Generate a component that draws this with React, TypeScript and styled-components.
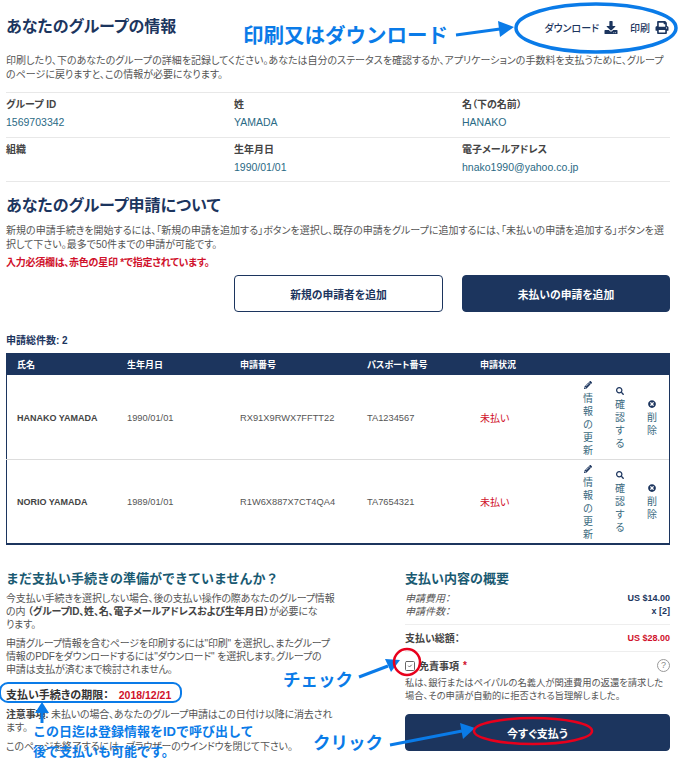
import styled, { createGlobalStyle } from "styled-components";
import { FaDownload, FaPrint, FaPencilAlt, FaSearch, FaTimesCircle } from "react-icons/fa";
import { SquareCheck } from "lucide-react";

const navy = "#1c355e";
const teal = "#2a6a85";
const red = "#d0112b";
const note = "#0a7be8";

const GlobalStyle = createGlobalStyle`
  html, body {
    margin: 0;
    background: #fff;
  }
  body {
    font-family: "Liberation Sans", "Noto Sans CJK JP", sans-serif;
    font-size: 10px;
    color: #555;
    font-feature-settings: "palt";
  }
`;

const Page = styled.div`
  position: relative;
  width: 680px;
  height: 771px;
  overflow: hidden;
  padding: 0 10px 0 6px;
  box-sizing: border-box;
`;

const TopBar = styled.div`
  display: flex;
  align-items: center;
  justify-content: space-between;
  height: 54px;
`;

const Title = styled.h1`
  margin: 0;
  font-size: 16px;
  line-height: 22px;
  font-weight: 700;
  color: ${navy};
`;

const Tools = styled.div`
  display: flex;
  align-items: center;
  gap: 12px;
  padding-right: 1px;
`;

const Tool = styled.a`
  display: flex;
  align-items: center;
  gap: 5px;
  color: ${navy};
  font-size: 10px;
  font-weight: 500;

  svg {
    width: 14px;
    height: 13px;
  }
`;

const Intro = styled.p`
  margin: 0;
  font-size: 10px;
  line-height: 14px;
  width: 664px;
`;

const InfoBlock = styled.div`
  width: 664px;
  margin-top: 10px;
  border-bottom: 1px solid #e8e8e8;
`;

const InfoGrid = styled.div`
  display: grid;
  grid-template-columns: 228px 228px 1fr;
  border-top: 1px solid #e8e8e8;
  padding: 5px 0 8px;

  &:last-child {
    padding-bottom: 7px;
  }
`;

const Info = styled.div`
  display: flex;
  flex-direction: column;
  gap: 3px;
`;

const InfoLabel = styled.span`
  font-size: 10px;
  line-height: 14px;
  font-weight: 700;
  color: #444;
`;

const InfoValue = styled.span`
  font-size: 10.5px;
  line-height: 14px;
  color: ${teal};
  min-height: 14px;
`;

const SectionTitle = styled(Title)`
  margin: 13px 0 7px;
`;

const Required = styled.p`
  margin: 4px 0 0;
  font-size: 10px;
  line-height: 14px;
  font-weight: 700;
  letter-spacing: -0.25px;
  color: ${red};
`;

const Actions = styled.div`
  display: grid;
  grid-template-columns: 209px 208px;
  column-gap: 19px;
  justify-content: end;
  margin-top: 5px;
  width: 664px;
`;

const Button = styled.button<{ $outline?: boolean }>`
  height: 37px;
  border-radius: 4px;
  border: 1px solid ${navy};
  background: ${(p) => (p.$outline ? "#fff" : navy)};
  color: ${(p) => (p.$outline ? navy : "#fff")};
  font-family: inherit;
  font-feature-settings: inherit;
  font-size: 10.8px;
  font-weight: 700;
`;

const Total = styled.div`
  margin-top: 22px;
  font-size: 10px;
  line-height: 14px;
  font-weight: 700;
  color: ${navy};
`;

const Table = styled.div`
  margin-top: 5px;
  width: 664px;
  box-sizing: border-box;
  border: 1px solid ${navy};
  border-bottom-width: 2px;
`;

const Row = styled.div`
  display: grid;
  grid-template-columns: 121px 113px 127px 113px 92px 1fr;
  align-items: center;
  margin-left: -1px;
`;

const HeadRow = styled(Row)`
  height: 21px;
  background: ${navy};
  color: #fff;
  font-size: 9px;
  font-weight: 700;
  margin-right: -1px;
  margin-bottom: 1px;
`;

const BodyRow = styled(Row)`
  height: 83px;

  & + & {
    border-top: 1px solid #ddd;
  }
`;

const Cell = styled.div<{ $pad?: number }>`
  padding-left: ${(p) => p.$pad ?? 0}px;
  font-size: 9.3px;
`;

const NameCell = styled(Cell)`
  font-size: 9px;
  font-weight: 700;
  color: #444;
`;

const HeadCell = styled(Cell)`
  font-size: 9px;
`;

const UnpaidCell = styled(Cell)`
  color: ${red};
  font-size: 10px;
`;

const RowActions = styled.div`
  display: flex;
`;

const RowAction = styled.a`
  width: 32px;
  display: flex;
  flex-direction: column;
  align-items: center;
  justify-content: center;
  color: #3a6a80;
  font-size: 10px;
  line-height: 13px;

  svg {
    width: 8px;
    height: 8px;
    margin: 2px 0 3px;
    color: ${navy};
  }
`;

const Upright = styled.span`
  width: 11px;
  text-align: center;
  word-break: break-all;
  font-feature-settings: normal;
`;

const Bottom = styled.div`
  display: grid;
  grid-template-columns: 399px 265px;
  margin-top: 25px;
`;

const SubTitle = styled.h2`
  margin: 0 0 4px;
  font-size: 13px;
  line-height: 18px;
  font-weight: 700;
  color: #1a5a72;
  font-feature-settings: normal;
`;

const LeftColumn = styled.div`
  width: 330px;
`;

const Copy = styled.p`
  margin: 0 0 6px;
  font-size: 10px;
  line-height: 13px;
  letter-spacing: -0.17px;

  b {
    color: #444;
  }
`;

const Deadline = styled.div`
  display: flex;
  gap: 10px;
  margin: 12px 0 6px;
  font-size: 11px;
  line-height: 14px;
  font-weight: 700;
  color: #333;
`;

const DeadlineDate = styled.span`
  color: ${red};
  font-size: 10.5px;
`;

const Summary = styled.div`
  display: flex;
  justify-content: space-between;
  font-size: 9px;
  line-height: 13px;
`;

const SummaryLabel = styled.i`
  color: #555;
  font-size: 10px;
`;

const SummaryValue = styled.b<{ $red?: boolean }>`
  color: ${(p) => (p.$red ? red : navy)};
`;

const TotalLine = styled(Summary)`
  border-top: 1px solid #eee;
  border-bottom: 1px solid #eee;
  margin-top: 6px;
  padding: 7px 0 6px;
  font-size: 10px;
  font-weight: 700;
  color: #444;

  b {
    font-size: 9px;
  }
`;

const Disclaimer = styled.div`
  display: flex;
  align-items: center;
  margin-top: 6px;
  height: 15px;
  font-size: 10px;
  font-weight: 700;
  color: #444;

  svg {
    color: #666;
    width: 12px;
    height: 12px;
    margin-left: -1px;
    margin-right: 3px;
  }
`;

const Star = styled.span`
  color: ${red};
  margin-left: 4px;
`;

const Help = styled.span`
  margin-left: auto;
  width: 11px;
  height: 11px;
  border: 1px solid #999;
  border-radius: 50%;
  color: #888;
  font-size: 9px;
  line-height: 11px;
  text-align: center;
  font-weight: 400;
`;

const DisclaimerText = styled.p`
  margin: 4px 0 11px;
  font-size: 9.3px;
  line-height: 13px;
`;

const PayButton = styled(Button)`
  width: 100%;
  font-size: 11px;
`;

const Overlay = styled.svg`
  position: absolute;
  inset: 0;
  pointer-events: none;
`;

const Note = styled.span<{ $x: number; $y: number; $size: number }>`
  position: absolute;
  left: ${(p) => p.$x}px;
  top: ${(p) => p.$y}px;
  font-size: ${(p) => p.$size}px;
  line-height: 1;
  font-weight: 700;
  color: ${note};
  white-space: nowrap;
  font-feature-settings: normal;
`;

type Applicant = {
  name: string;
  birth: string;
  number: string;
  passport: string;
};

const applicants: Applicant[] = [
  { name: "HANAKO YAMADA", birth: "1990/01/01", number: "RX91X9RWX7FFTT22", passport: "TA1234567" },
  { name: "NORIO YAMADA", birth: "1989/01/01", number: "R1W6X887X7CT4QA4", passport: "TA7654321" },
];

const Arrow = ({ d, tip }: { d: string; tip: string }) => (
  <>
    <path d={d} fill="none" stroke={note} strokeWidth={3} />
    <polygon points={tip} fill={note} />
  </>
);

const App = () => {
  return (
    <Page>
      <GlobalStyle />
      <TopBar>
        <Title>あなたのグループの情報</Title>
        <Tools>
          <Tool>
            ダウンロード
            <FaDownload />
          </Tool>
          <Tool>
            印刷
            <FaPrint />
          </Tool>
        </Tools>
      </TopBar>
      <Intro>
        印刷したり、下のあなたのグループの詳細を記録してください。あなたは自分のステータスを確認するか、アプリケーションの手数料を支払うために、グループのページに戻りますと、この情報が必要になります。
      </Intro>
      <InfoBlock>
        <InfoGrid>
          <Info>
            <InfoLabel>グループ ID</InfoLabel>
            <InfoValue>1569703342</InfoValue>
          </Info>
          <Info>
            <InfoLabel>姓</InfoLabel>
            <InfoValue>YAMADA</InfoValue>
          </Info>
          <Info>
            <InfoLabel>名（下の名前）</InfoLabel>
            <InfoValue>HANAKO</InfoValue>
          </Info>
        </InfoGrid>
        <InfoGrid>
          <Info>
            <InfoLabel>組織</InfoLabel>
            <InfoValue />
          </Info>
          <Info>
            <InfoLabel>生年月日</InfoLabel>
            <InfoValue>1990/01/01</InfoValue>
          </Info>
          <Info>
            <InfoLabel>電子メールアドレス</InfoLabel>
            <InfoValue>hnako1990@yahoo.co.jp</InfoValue>
          </Info>
        </InfoGrid>
      </InfoBlock>

      <SectionTitle>あなたのグループ申請について</SectionTitle>
      <Intro>
        新規の申請手続きを開始するには、「新規の申請を追加する」ボタンを選択し、既存の申請をグループに追加するには、「未払いの申請を追加する」ボタンを選択して下さい。最多で50件までの申請が可能です。
      </Intro>
      <Required>入力必須欄は、赤色の星印 *で指定されています。</Required>
      <Actions>
        <Button $outline>新規の申請者を追加</Button>
        <Button>未払いの申請を追加</Button>
      </Actions>

      <Total>申請総件数: 2</Total>
      <Table>
        <HeadRow>
          <HeadCell $pad={11}>氏名</HeadCell>
          <HeadCell>生年月日</HeadCell>
          <HeadCell>申請番号</HeadCell>
          <HeadCell>パスポート番号</HeadCell>
          <HeadCell>申請状況</HeadCell>
          <HeadCell />
        </HeadRow>
        {applicants.map((a) => (
          <BodyRow key={a.number}>
            <NameCell $pad={11}>{a.name}</NameCell>
            <Cell>{a.birth}</Cell>
            <Cell>{a.number}</Cell>
            <Cell>{a.passport}</Cell>
            <UnpaidCell>未払い</UnpaidCell>
            <RowActions>
              <RowAction>
                <FaPencilAlt />
                <Upright>情報の更新</Upright>
              </RowAction>
              <RowAction>
                <FaSearch />
                <Upright>確認する</Upright>
              </RowAction>
              <RowAction>
                <FaTimesCircle />
                <Upright>削除</Upright>
              </RowAction>
            </RowActions>
          </BodyRow>
        ))}
      </Table>

      <Bottom>
        <LeftColumn>
          <SubTitle>まだ支払い手続きの準備ができていませんか？</SubTitle>
          <Copy>
            今支払い手続きを選択しない場合、後の支払い操作の際あなたのグループ情報の内 <b>（グループID、姓、名、電子メールアドレスおよび生年月日）</b>が必要にな<br />ります。
          </Copy>
          <Copy>
            申請グループ情報を含むページを印刷するには"印刷" を選択し、またグループ情報のPDFをダウンロードするには"ダウンロード" を選択します。グループの<br />申請は支払が済むまで検討されません。
          </Copy>
          <Deadline>
            支払い手続きの期限：
            <DeadlineDate>2018/12/21</DeadlineDate>
          </Deadline>
          <Copy>
            <b>注意事項:</b> 未払いの場合、あなたのグループ申請はこの日付け以降に消去され<br />ます。
          </Copy>
          <Copy>このページを終了するには、 ブラウザーのウインドウを閉じて下さい。</Copy>
        </LeftColumn>
        <div>
          <SubTitle>支払い内容の概要</SubTitle>
          <Summary>
            <SummaryLabel>申請費用：</SummaryLabel>
            <SummaryValue>US $14.00</SummaryValue>
          </Summary>
          <Summary>
            <SummaryLabel>申請件数：</SummaryLabel>
            <SummaryValue>x [2]</SummaryValue>
          </Summary>
          <TotalLine>
            <span>支払い総額：</span>
            <SummaryValue $red>US $28.00</SummaryValue>
          </TotalLine>
          <Disclaimer>
            <SquareCheck />
            免責事項
            <Star>*</Star>
            <Help>?</Help>
          </Disclaimer>
          <DisclaimerText>
            私は、銀行またはペイパルの名義人が関連費用の返還を請求した<br />場合、その申請が自動的に拒否される旨理解しました。
          </DisclaimerText>
          <PayButton>今すぐ支払う</PayButton>
        </div>
      </Bottom>

      <Overlay width={680} height={771} viewBox="0 0 680 771">
        <ellipse cx={596} cy={28} rx={80} ry={24} fill="none" stroke={note} strokeWidth={3.5} />
        <Arrow d="M456 35 L500 29" tip="498,21 514,27 500,37" />
        <rect x={0} y={683} width={181} height={19} rx={8} fill="none" stroke={note} strokeWidth={2} />
        <Arrow d="M42 723 L42 712" tip="35,713 42,702 49,713" />
        <Arrow d="M359 677 L388 666" tip="385,659 400,660 391,672" />
        <Arrow d="M390 745 L462 731" tip="460,723 475,728 463,739" />
        <circle cx={407} cy={662} r={13} fill="none" stroke="#e8001c" strokeWidth={2.5} />
        <ellipse cx={533} cy={731} rx={59} ry={13} fill="none" stroke="#e8001c" strokeWidth={2.5} />
      </Overlay>
      <Note $x={243} $y={26} $size={20.5}>印刷又はダウンロード</Note>
      <Note $x={283} $y={672} $size={17.5}>チェック</Note>
      <Note $x={313} $y={735} $size={17.5}>クリック</Note>
      <Note $x={33} $y={725} $size={13}>この日迄は登録情報をIDで呼び出して</Note>
      <Note $x={33} $y={745} $size={13}>後で支払いも可能です。</Note>
    </Page>
  );
};

export default App;
